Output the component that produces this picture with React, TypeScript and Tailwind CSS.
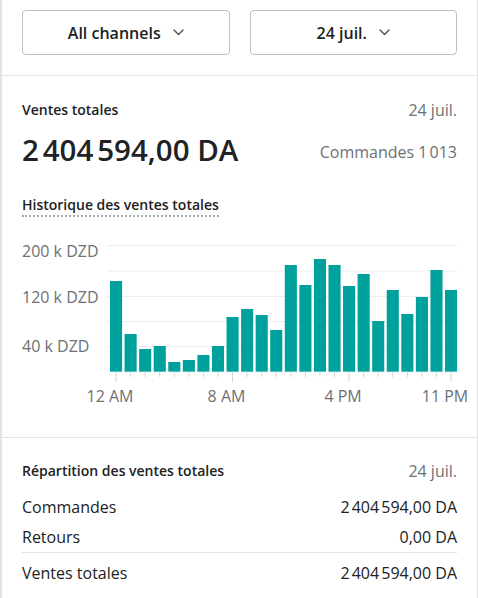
// bar tops (global y) for each hour, baseline at 371.7
const barTops = [281, 334, 349, 346, 362, 360, 355, 346, 317, 309, 315, 330, 265, 285, 259, 265, 286, 274, 321, 290, 314, 297, 270, 290];
const gridYs = [245.5, 271, 296.5, 321.5, 346.5];
const yLabels = [
    { text: "200 k DZD", y: 251 },
    { text: "120 k DZD", y: 297 },
    { text: "40 k DZD", y: 345.5 },
];
const xLabels: Record<number, string> = { 0: "12 AM", 8: "8 AM", 16: "4 PM", 23: "11 PM" };

const OX = 22; // svg left in page coords
const OY = 232; // svg top in page coords
const BASE = 371.7;
const PITCH = 14.565;

function Select({ label }: { label: string }) {
    return (
        <button className="h-[45px] rounded-[4px] border border-[#babfc3] bg-white flex items-center justify-center gap-[12px] text-[16px] font-semibold text-[#202223]">
            <span>{label}</span>
            <svg width="11" height="7" viewBox="0 0 11 7" fill="none">
                <path d="M1 1l4.5 4.5L10 1" stroke="#5c5f62" strokeWidth="1.6" strokeLinecap="round" strokeLinejoin="round" />
            </svg>
        </button>
    );
}

function Chart() {
    return (
        <svg width="455" height="180" className="block overflow-visible">
            {gridYs.map((y) => (
                <line key={y} x1={107 - OX} x2={457 - OX} y1={y - OY} y2={y - OY} stroke="#ededed" strokeWidth="1" />
            ))}
            {yLabels.map((l) => (
                <text key={l.text} x={0} y={l.y - OY} dominantBaseline="central" fontSize="16" fill="#6d7175">
                    {l.text}
                </text>
            ))}
            {barTops.map((top, i) => {
                const x = 110 + i * PITCH;
                const cx = x + 6;
                const labelled = xLabels[i] !== undefined;
                return (
                    <g key={i}>
                        <rect x={x - OX} y={top - OY} width={12.1} height={BASE - top} fill="#00a19d" />
                        <line x1={cx - OX} x2={cx - OX} y1={BASE - OY} y2={(labelled ? 382 : 377) - OY} stroke="#d4d6d9" strokeWidth="1" />
                        {labelled && (
                            <text x={cx - 6 - OX} y={396 - OY} textAnchor="middle" dominantBaseline="central" fontSize="16" fill="#6d7175">
                                {xLabels[i]}
                            </text>
                        )}
                    </g>
                );
            })}
        </svg>
    );
}

export default function App() {
    return (
        <div className="w-[478px] h-[598px] overflow-hidden bg-white border-l-2 border-r border-[#e3e3e3] font-['Open_Sans',sans-serif] text-[#202223]">
            {/* filters */}
            <div className="grid grid-cols-2 gap-5 px-5 pt-[10px] pb-5 border-b border-[#e3e3e3]">
                <Select label="All channels" />
                <Select label="24 juil." />
            </div>

            {/* total sales */}
            <div className="h-[362px] px-5 pt-6 border-b border-[#e3e3e3]">
                <div className="flex items-center justify-between leading-5">
                    <span className="text-[14px] font-semibold">Ventes totales</span>
                    <span className="text-[16px] text-[#6d7175]">24 juil.</span>
                </div>
                <div className="mt-[12px] flex items-center justify-between leading-[36px]">
                    <span className="text-[29.5px] font-semibold">2{"\u202F"}404{"\u202F"}594,00 DA</span>
                    <span className="text-[16px] text-[#6d7175] translate-y-[2px]">Commandes 1{"\u202F"}013</span>
                </div>
                <div className="mt-[27px] flex">
                    <span className="text-[14px] font-semibold leading-5 border-b-2 border-dotted border-[#a6abb0]">
                        Historique des ventes totales
                    </span>
                </div>
                <div className="mt-[15px]">
                    <Chart />
                </div>
            </div>

            {/* breakdown */}
            <div className="px-5 pt-[23px]">
                <div className="flex items-center justify-between leading-5">
                    <span className="text-[14px] font-semibold">Répartition des ventes totales</span>
                    <span className="text-[16px] text-[#6d7175]">24 juil.</span>
                </div>
                <div className="mt-[11px] text-[16px]">
                    <div className="flex justify-between leading-[30px]">
                        <span>Commandes</span>
                        <span>2{"\u202F"}404{"\u202F"}594,00 DA</span>
                    </div>
                    <div className="flex justify-between leading-[30px]">
                        <span>Retours</span>
                        <span>0,00 DA</span>
                    </div>
                    <div className="flex justify-between leading-[30px] border-t border-[#e1e3e5] pt-[5px]">
                        <span>Ventes totales</span>
                        <span>2{"\u202F"}404{"\u202F"}594,00 DA</span>
                    </div>
                </div>
            </div>
        </div>
    );
}
